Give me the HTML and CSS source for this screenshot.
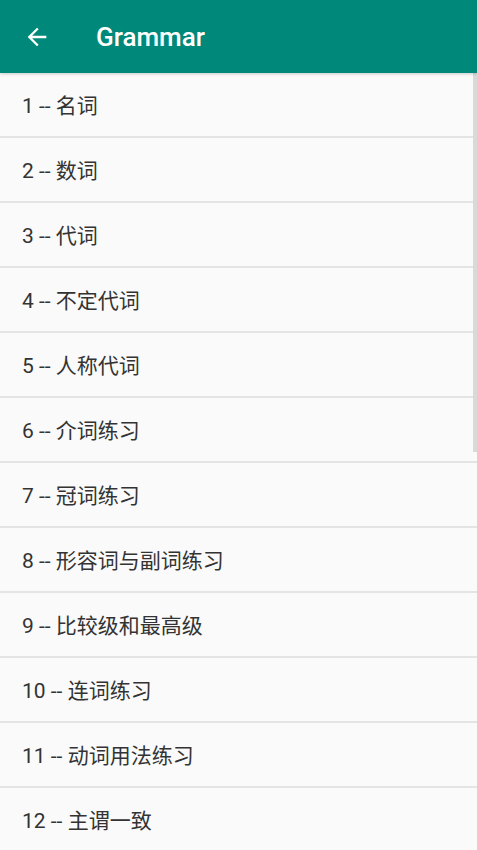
FILE: index.html
```html
<!DOCTYPE html>
<html lang="zh">
<head>
    <meta charset="UTF-8">
    <meta name="viewport" content="width=device-width, initial-scale=1.0">
    <title>Grammar</title>
    <link rel="stylesheet" href="styles.css">
</head>
<body>
<div class="toolbar">
    <svg class="back-icon" viewBox="0 0 24 24" width="28" height="28">
        <path d="M20 11H7.83l5.59-5.59L12 4l-8 8 8 8 1.41-1.41L7.83 13H20v-2z" fill="#fff"/>
    </svg>
    <h1>Grammar</h1>
</div>

<div class="list-wrap">
    <ul class="lesson-list">
        <li>1 -- 名词</li>
        <li>2 -- 数词</li>
        <li>3 -- 代词</li>
        <li>4 -- 不定代词</li>
        <li>5 -- 人称代词</li>
        <li>6 -- 介词练习</li>
        <li>7 -- 冠词练习</li>
        <li>8 -- 形容词与副词练习</li>
        <li>9 -- 比较级和最高级</li>
        <li>10 -- 连词练习</li>
        <li>11 -- 动词用法练习</li>
        <li>12 -- 主谓一致</li>
    </ul>
    <div class="scrollbar"></div>
</div>
</body>
</html>
```

FILE: styles.css
```css
body {
    margin: 0;
    background-color: #fafafa;
    font-family: Roboto, "Noto Sans CJK SC", sans-serif;
    overflow: hidden;
    height: 850px;
}

.toolbar {
    display: flex;
    align-items: center;
    height: 73px;
    background-color: #00897b;
    padding-left: 23px;
    box-shadow: 0 1px 3px rgba(0,0,0,0.2);
    position: relative;
    z-index: 1;
}
.back-icon {
    display: block;
}
.toolbar h1 {
    margin: 0 0 0 45px;
    color: white;
    font-size: 26px;
    font-weight: 500;
}

.list-wrap {
    position: relative;
}
.lesson-list {
    list-style: none;
    margin: 0;
    padding: 0;
}
.lesson-list li {
    height: 63px;
    line-height: 66px;
    padding-left: 22px;
    font-size: 21px;
    color: #333;
    border-bottom: 2px solid #e4e4e4;
}
.scrollbar {
    position: absolute;
    top: 0;
    right: 0;
    width: 4px;
    height: 379px;
    background-color: #d9d9d9;
}
```
